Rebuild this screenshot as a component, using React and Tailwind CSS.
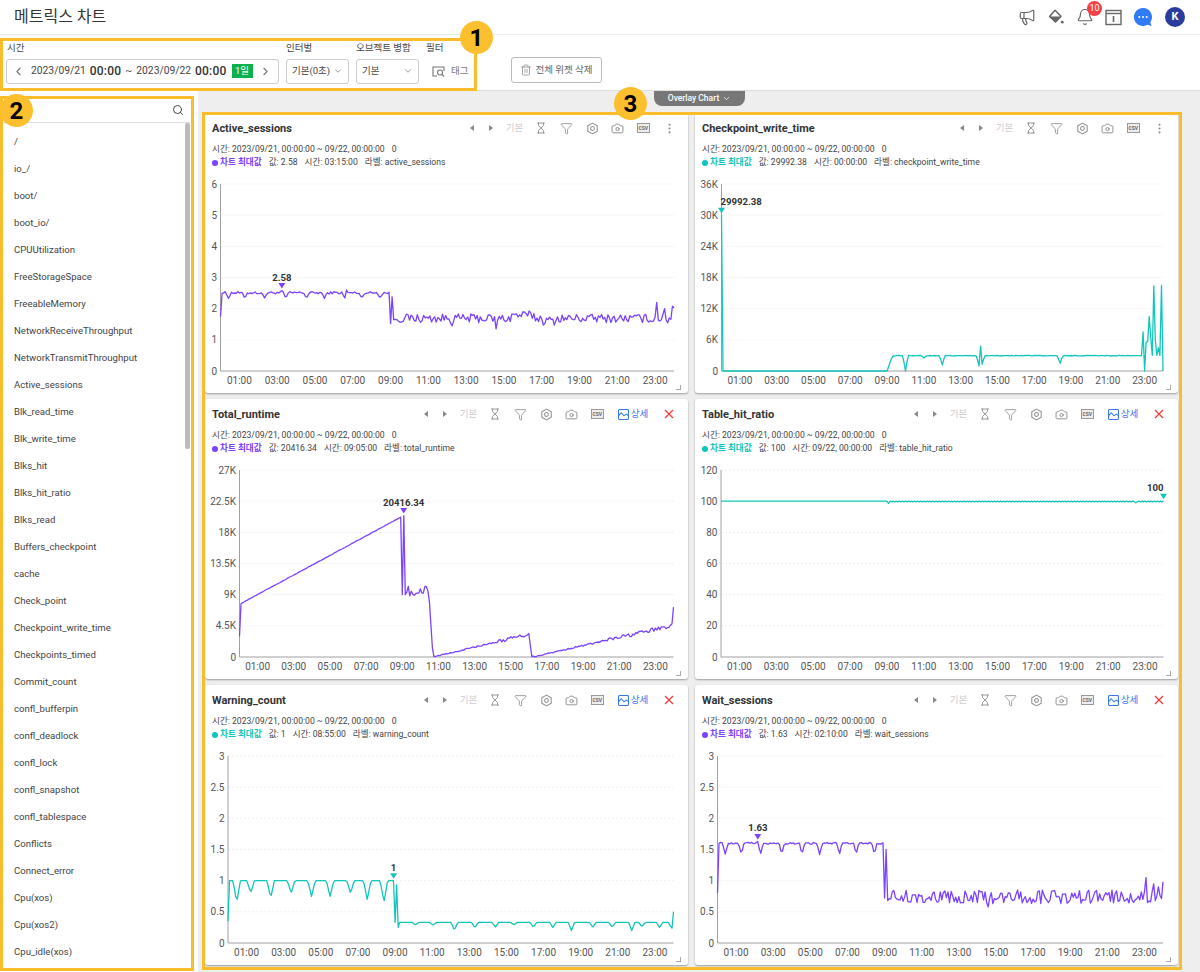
import { Megaphone, Bell, Hourglass, Funnel, Camera, EllipsisVertical, Search, ChevronLeft, ChevronRight, ChevronDown, Trash2 } from 'lucide-react';

const PURPLE = '#7b42ff';
const TEAL = '#10c6ba';

const metrics = ['/', 'io_/', 'boot/', 'boot_io/', 'CPUUtilization', 'FreeStorageSpace', 'FreeableMemory', 'NetworkReceiveThroughput', 'NetworkTransmitThroughput', 'Active_sessions', 'Blk_read_time', 'Blk_write_time', 'Blks_hit', 'Blks_hit_ratio', 'Blks_read', 'Buffers_checkpoint', 'cache', 'Check_point', 'Checkpoint_write_time', 'Checkpoints_timed', 'Commit_count', 'confl_bufferpin', 'confl_deadlock', 'confl_lock', 'confl_snapshot', 'confl_tablespace', 'Conflicts', 'Connect_error', 'Cpu(xos)', 'Cpu(xos2)', 'Cpu_idle(xos)'];

const hours = ['01:00', '03:00', '05:00', '07:00', '09:00', '11:00', '13:00', '15:00', '17:00', '19:00', '21:00', '23:00'];

function makeRandom(seed) {
  let s = seed;
  return () => {
    s = (s * 16807) % 2147483647;
    return s / 2147483647;
  };
}

function applyDips(h, v, dips, width = 0.14) {
  let out = v;
  for (const [c, d] of dips) {
    const t = Math.abs(h - c);
    if (t < width) out = Math.min(out, d + (v - d) * (t / width));
  }
  return out;
}

function build(fn, overrides = []) {
  const arr = [];
  for (let i = 0; i <= 288; i++) arr.push(fn(i / 12, i));
  for (const [h, v] of overrides) arr[Math.round(h * 12)] = v;
  return arr;
}

const morningHours = [0.42, 1.28, 2.32, 3.46, 4.55, 5.5, 6.57, 7.47, 8.45];

function activeSeries() {
  const r = makeRandom(1234);
  return build((h) => {
    if (h < 8.95) return applyDips(h, 2.51 + (r() - 0.5) * 0.08, morningHours.map((c) => [c, 2.33]));
    const wave = h > 15.4 && h < 16.6 ? 0.1 : h > 17 && h < 17.8 ? -0.08 : 0;
    return 1.69 + wave + (r() - 0.5) * 0.28;
  }, [[0, 1.75], [3.25, 2.58], [6.67, 2.6], [9, 1.52], [9.08, 2.38], [9.17, 1.65], [12.25, 1.45], [14.58, 1.35], [23.08, 2.2], [22.92, 1.6], [23.5, 2.0], [23.67, 1.55], [23.92, 2.08], [24, 2.03]]);
}

function waitSeries() {
  const r = makeRandom(4321);
  return build((h) => {
    if (h < 8.95) return applyDips(h, 1.6 + (r() - 0.5) * 0.03, morningHours.map((c) => [c, 1.42]));
    return 0.74 + (r() - 0.5) * 0.22;
  }, [[0, 0.8], [2.17, 1.63], [9, 0.72], [9.08, 1.5], [9.17, 0.68], [14.58, 0.58], [23.08, 1.05], [23.17, 0.65], [23.5, 0.95], [23.58, 0.68], [23.75, 0.9], [24, 0.98]]);
}

function warningSeries() {
  const morning = [[0.47, 0.65], [1.22, 0.8], [2.3, 0.72], [3.4, 0.8], [4.5, 0.75], [5.5, 0.75], [6.6, 0.8], [7.5, 0.7], [8.4, 0.65]];
  const rest = [[10.1, 0.29], [11.05, 0.28], [12.2, 0.2], [13.3, 0.24], [14.4, 0.25], [15.4, 0.29], [16.45, 0.25], [17.5, 0.25], [18.5, 0.2], [19.65, 0.25], [20.7, 0.25], [21.75, 0.2], [22.3, 0.26], [23.25, 0.25], [23.9, 0.23]];
  return build((h) => {
    if (h < 8.9) return applyDips(h, 1, morning, 0.2);
    return applyDips(h, 0.33, rest, 0.17);
  }, [[0, 0.35], [8.92, 1], [9, 0.33], [9.08, 0.93], [9.17, 0.25], [24, 0.5]]);
}

function totalSeries() {
  const r = makeRandom(777);
  return build((h) => {
    if (h < 8.95) return 7600 + (h / 8.92) * 12600 + (r() - 0.5) * 60;
    if (h < 10.45) return 9500 + (r() - 0.5) * 1700;
    if (h < 10.7) return 10000 - ((h - 10.45) / 0.25) * 10000;
    if (h < 16) return Math.max(0, ((h - 10.7) / 5.3) * 3300 + (r() - 0.5) * (h > 14 ? 500 : 180));
    if (h < 16.17) return 3400 - ((h - 16) / 0.17) * 3400;
    return Math.max(0, ((h - 16.17) / 7.7) * 4500 + (r() - 0.5) * (h > 20 ? 560 : 200));
  }, [[0, 3000], [8.92, 20200], [9, 9000], [9.08, 20416], [9.17, 9000], [10.5, 8000], [23.92, 4800], [24, 7200]]);
}

function checkpointSeries() {
  const r = makeRandom(99);
  const dips = [[10, 0], [11, 2500], [12, 1200], [14, 1000], [14.17, 1300], [18.4, 1300], [22.98, 0]];
  return build((h) => {
    if (h < 9) return 0;
    if (h < 9.3) return ((h - 9) / 0.3) * 3000;
    if (h > 22.8) return 3000;
    return applyDips(h, 2950 + (r() - 0.5) * 120, dips, 0.14);
  }, [[0, 29992], [14.08, 4800], [22.83, 3000], [22.92, 7500], [23, 0], [23.08, 5500], [23.17, 5700], [23.25, 10500], [23.33, 6500], [23.5, 16400], [23.58, 6000], [23.75, 4500], [23.92, 16500], [24, 0]]);
}

function tableSeries() {
  return build((h, i) => {
    if (h < 9) return 100;
    return i % 2 ? 99.6 : 100;
  }, [[9.08, 98.5], [22.5, 99]]);
}

const charts = [
  { title: 'Active_sessions', color: PURPLE, value: '2.58', time: '03:15:00', label: 'active_sessions', left: 15.5, right: 469, max: 6, ticks: ['6', '5', '4', '3', '2', '1', '0'], data: activeSeries(), peak: [3.25, 2.58], mark: '2.58', anchor: 'middle' },
  { title: 'Checkpoint_write_time', color: TEAL, value: '29992.38', time: '00:00:00', label: 'checkpoint_write_time', left: 26.5, right: 468, max: 36000, ticks: ['36K', '30K', '24K', '18K', '12K', '6K', '0'], data: checkpointSeries(), peak: [0, 29992], mark: '29992.38', anchor: 'start' },
  { title: 'Total_runtime', color: PURPLE, value: '20416.34', time: '09:05:00', label: 'total_runtime', left: 34.5, right: 468.5, max: 27000, ticks: ['27K', '22.5K', '18K', '13.5K', '9K', '4.5K', '0'], data: totalSeries(), peak: [9.08, 20416], mark: '20416.34', anchor: 'middle', detail: true },
  { title: 'Table_hit_ratio', color: TEAL, value: '100', time: '09/22, 00:00:00', label: 'table_hit_ratio', left: 26, right: 468.5, max: 120, ticks: ['120', '100', '80', '60', '40', '20', '0'], data: tableSeries(), peak: [24, 100], mark: '100', anchor: 'end', detail: true },
  { title: 'Warning_count', color: TEAL, value: '1', time: '08:55:00', label: 'warning_count', left: 23, right: 468.5, max: 3, ticks: ['3', '2.5', '2', '1.5', '1', '0.5', '0'], data: warningSeries(), peak: [8.92, 1], mark: '1', anchor: 'middle', detail: true },
  { title: 'Wait_sessions', color: PURPLE, value: '1.63', time: '02:10:00', label: 'wait_sessions', left: 22.5, right: 468, max: 3, ticks: ['3', '2.5', '2', '1.5', '1', '0.5', '0'], data: waitSeries(), peak: [2.17, 1.63], mark: '1.63', anchor: 'middle', detail: true },
];

function LineChart({ chart }) {
  const top = 11;
  const bottom = 198;
  const { left, right, max, ticks, data, color, peak, mark, anchor } = chart;
  const px = (h) => left + (h / 24) * (right - left);
  const py = (v) => bottom - (v / max) * (bottom - top);
  const points = data.map((v, i) => `${px(i / 12).toFixed(1)},${py(v).toFixed(1)}`).join(' ');
  const peakX = px(peak[0]);
  const peakY = py(peak[1]);
  const markX = anchor === 'end' ? right : anchor === 'start' ? left - 1 : peakX;

  return (
    <svg width="483" height="220" viewBox="0 0 483 220" className="block font-[Roboto,sans-serif]">
      {ticks.map((t, i) => {
        const y = top + (i * (bottom - top)) / (ticks.length - 1);
        return (
          <g key={t}>
            {i < ticks.length - 1 && <line x1={left} x2={right} y1={y} y2={y} stroke="#efefef" strokeWidth="1" strokeDasharray="2 2" />}
            <text x={left - 3.5} y={y + 3.5} textAnchor="end" fontSize="10" fill="#555">{t}</text>
          </g>
        );
      })}
      <line x1={left} x2={left} y1={top} y2={bottom} stroke="#a0a0a0" strokeWidth="1" />
      <line x1={left} x2={right} y1={bottom} y2={bottom} stroke="#a0a0a0" strokeWidth="1" />
      {hours.map((h, i) => (
        <text key={h} x={px(1 + i * 2)} y={211} textAnchor="middle" fontSize="10" fill="#555">{h}</text>
      ))}
      <polyline points={points} fill="none" stroke={color} strokeWidth="1.3" strokeLinejoin="round" />
      <polygon points={`${peakX - 3.5},${peakY - 7.5} ${peakX + 3.5},${peakY - 7.5} ${peakX},${peakY - 2}`} fill={color} />
      <text x={markX} y={peakY - 10} textAnchor={anchor} fontSize="9.6" fontWeight="700" fill="#333">{mark}</text>
    </svg>
  );
}

function GearIcon() {
  return (
    <svg width="13" height="13" viewBox="0 0 24 24" fill="none" stroke="#909090" strokeWidth="1.9">
      <path d="M12 2l8.7 5v10L12 22l-8.7-5V7z" strokeLinejoin="round" />
      <circle cx="12" cy="12" r="3.5" />
    </svg>
  );
}

function CsvIcon() {
  return (
    <div className="w-[13px] h-[10px] border border-[#999] bg-[#eee] flex items-center justify-center text-[5px] font-bold leading-none text-[#666]">CSV</div>
  );
}

function DetailIcon() {
  return (
    <svg width="11" height="11" viewBox="0 0 12 12" fill="none">
      <rect x="0.6" y="0.6" width="10.8" height="10.8" rx="1" stroke="#3578f0" strokeWidth="1.2" />
      <path d="M1 7l2.5-3 3 3.5L9 5.5l2 1.5" stroke="#3578f0" strokeWidth="1.1" />
    </svg>
  );
}

function CloseIcon() {
  return (
    <svg width="10" height="10" viewBox="0 0 10 10" fill="none">
      <path d="M1 1l8 8M9 1l-8 8" stroke="#ee3b3b" strokeWidth="1.3" />
    </svg>
  );
}

function Slot({ children, className = 'w-[25.5px]' }) {
  return <div className={`flex items-center justify-center shrink-0 ${className}`}>{children}</div>;
}

function ChartCard({ chart }) {
  return (
    <div className="relative h-[280px] w-[483px] bg-white rounded-[3px] shadow-[0_1px_2px_rgba(0,0,0,0.35)]">
      <div className="flex items-center justify-between h-[30px] pl-[7px] pr-[6px]">
        <div className="text-[11px] font-bold text-[#333] leading-none">{chart.title}</div>
        <div className="flex items-center">
          <Slot className="w-[19px]"><div className="w-0 h-0 border-y-[3.5px] border-y-transparent border-r-[4px] border-r-[#888]" /></Slot>
          <Slot className="w-[19px]"><div className="w-0 h-0 border-y-[3.5px] border-y-transparent border-l-[4px] border-l-[#888]" /></Slot>
          <Slot className="w-[28px]"><span className="text-[9.5px] text-[#ccc]">기본</span></Slot>
          <Slot><Hourglass size={12} color="#909090" strokeWidth={1.8} /></Slot>
          <Slot><Funnel size={13} color="#909090" strokeWidth={1.6} /></Slot>
          <Slot><GearIcon /></Slot>
          <Slot><Camera size={13} color="#909090" strokeWidth={1.8} /></Slot>
          <Slot><CsvIcon /></Slot>
          {chart.detail ? (
            <>
              <Slot className="w-[46px] gap-[2px]">
                <DetailIcon />
                <span className="text-[9.5px] text-[#3578f0]">상세</span>
              </Slot>
              <Slot className="w-[26px]"><CloseIcon /></Slot>
            </>
          ) : (
            <Slot className="w-[26px]"><EllipsisVertical size={13} color="#909090" /></Slot>
          )}
        </div>
      </div>
      <div className="pl-[7px] h-[30px] text-[8.6px] text-[#444] leading-[13px]">
        <div className="flex gap-[7px]">
          <span>시간: 2023/09/21, 00:00:00 ~ 09/22, 00:00:00</span>
          <span>0</span>
        </div>
        <div className="flex items-center gap-[7px]">
          <span className="flex items-center gap-[2px] font-bold" style={{ color: chart.color }}>
            <span className="w-[6px] h-[6px] rounded-full inline-block" style={{ background: chart.color }} />
            차트 최대값
          </span>
          <span>값: {chart.value}</span>
          <span>시간: {chart.time}</span>
          <span>라벨: {chart.label}</span>
        </div>
      </div>
      <LineChart chart={chart} />
      <div className="absolute right-[7px] bottom-[3px] w-[5px] h-[5px] border-r border-b border-[#aaa]" />
    </div>
  );
}

function PaintIcon() {
  return (
    <svg width="18" height="18" viewBox="0 0 18 18" fill="none">
      <path d="M8 2.2L14 8.2 8.5 14 2.6 8.4z" stroke="#666" strokeWidth="1.5" strokeLinejoin="round" />
      <path d="M2.6 8.4h11.4L8.5 14z" fill="#666" />
      <circle cx="15.3" cy="14.2" r="1.4" fill="#666" />
    </svg>
  );
}

function PanelIcon() {
  return (
    <svg width="17" height="17" viewBox="0 0 17 17" fill="none">
      <rect x="1" y="1.5" width="15" height="14" stroke="#666" strokeWidth="1.4" />
      <path d="M1 4.5h15" stroke="#666" strokeWidth="1.4" />
      <path d="M8.5 7v6" stroke="#666" strokeWidth="1.6" />
    </svg>
  );
}

function ChatIcon() {
  return (
    <svg width="20" height="20" viewBox="0 0 20 20">
      <path d="M10 1a9 9 0 1 0 4.6 16.7L18.6 19l-1.3-3.8A9 9 0 0 0 10 1z" fill="#2f7bf5" />
      <circle cx="6.3" cy="10" r="1" fill="#fff" />
      <circle cx="10" cy="10" r="1" fill="#fff" />
      <circle cx="13.7" cy="10" r="1" fill="#fff" />
    </svg>
  );
}

function FieldLabel({ children, className = '' }) {
  return <div className={`text-[9.5px] text-[#444] leading-none mb-[6px] ${className}`}>{children}</div>;
}

function Annotation({ n, className }) {
  return (
    <div className={`absolute w-[33px] h-[33px] rounded-full bg-[#fcc02e] flex items-center justify-center text-[24px] font-bold text-black ${className}`}>{n}</div>
  );
}

export default function App() {
  return (
    <div className="relative w-[1200px] h-[972px] overflow-hidden bg-white font-[Roboto,'Noto_Sans_CJK_KR',sans-serif]">
      <header className="flex items-center justify-between h-[35px] pl-[14px] border-b border-[#eee]">
        <h1 className="text-[16px] text-[#333]">메트릭스 차트</h1>
        <div className="flex items-center pr-[15px]">
          <Megaphone size={18} color="#666" strokeWidth={1.6} />
          <div className="w-[29px] flex justify-center ml-[5px]"><PaintIcon /></div>
          <div className="relative w-[29px] flex justify-center">
            <Bell size={18} color="#666" strokeWidth={1.6} />
            <span className="absolute left-[17px] top-[-7px] w-[15px] h-[15px] rounded-full bg-[#f43f46] text-white text-[9px] flex items-center justify-center">10</span>
          </div>
          <div className="w-[29px] flex justify-center"><PanelIcon /></div>
          <div className="w-[29px] flex justify-center"><ChatIcon /></div>
          <div className="ml-[8px] w-[20px] h-[20px] rounded-full bg-[#2a3d9c] text-white text-[11px] font-bold flex items-center justify-center">K</div>
        </div>
      </header>

      <div className="flex h-[56px] pl-[6px] pt-[8px] border-b border-[#ddd]">
        <div className="w-[280px]">
          <FieldLabel className="pl-[1px]">시간</FieldLabel>
          <div className="w-[273px] h-[25px] border border-[#ccc] rounded-[3px] flex items-center text-[10.3px] text-[#444]">
            <ChevronLeft size={13} color="#777" className="ml-[5px] mr-[6px]" />
            <span>2023/09/21</span>
            <span className="ml-[4px] text-[12px] font-medium tracking-[0.2px] text-[#333]">00:00</span>
            <span className="ml-[4px] mr-[4px]">~</span>
            <span>2023/09/22</span>
            <span className="ml-[4px] text-[12px] font-medium tracking-[0.2px] text-[#333]">00:00</span>
            <span className="ml-[5px] w-[21px] h-[14px] bg-[#0bb04f] text-white text-[9.5px] flex items-center justify-center">1일</span>
            <ChevronRight size={13} color="#777" className="ml-[6px]" />
          </div>
        </div>
        <div className="w-[70px]">
          <FieldLabel>인터벌</FieldLabel>
          <div className="w-[63px] h-[25px] border border-[#ccc] rounded-[3px] flex items-center justify-between px-[5px] text-[9.5px] text-[#444]">
            기본(0초)
            <ChevronDown size={10} color="#888" />
          </div>
        </div>
        <div className="w-[70px]">
          <FieldLabel>오브젝트 병합</FieldLabel>
          <div className="w-[63px] h-[25px] border border-[#ccc] rounded-[3px] flex items-center justify-between px-[5px] text-[9.5px] text-[#444]">
            기본
            <ChevronDown size={10} color="#888" />
          </div>
        </div>
        <div className="w-[85px]">
          <FieldLabel>필터</FieldLabel>
          <div className="h-[25px] flex items-center pl-[6px] text-[9.5px] text-[#777] gap-[5px]">
            <svg width="14" height="13" viewBox="0 0 14 13" fill="none">
              <path d="M5 11H1V2h11v4" stroke="#777" strokeWidth="1.1" />
              <circle cx="8" cy="7.5" r="2.5" stroke="#777" strokeWidth="1.1" />
              <path d="M10 9.5l2 2" stroke="#777" strokeWidth="1.1" />
            </svg>
            태그
          </div>
        </div>
        <div className="h-[26px] w-[91px] mt-[14px] border border-[#bbb] rounded-[3px] flex items-center justify-center gap-[3px] text-[9.5px] text-[#666]">
          <Trash2 size={12} color="#888" strokeWidth={1.5} />
          전체 위젯 삭제
        </div>
      </div>

      <div className="flex h-[881px]">
        <aside className="w-[198px] shrink-0 bg-white flex flex-col">
          <div className="h-[26px] ml-[3px] w-[187px] mt-[6px] flex items-center justify-end pr-[6px] border-b border-[#ddd] shrink-0">
            <Search size={12} color="#444" />
          </div>
          <div className="flex flex-1 min-h-0 w-[190px]">
            <ul className="flex-1 pl-[14px] text-[9.6px] text-[#444] overflow-hidden pt-[6px]">
              {metrics.map((m) => (
                <li key={m} className="h-[27px] flex items-center">{m}</li>
              ))}
            </ul>
            <div className="w-[5px] shrink-0">
              <div className="h-[326px] bg-[#bbb] rounded-[2px]" />
            </div>
          </div>
        </aside>
        <main className="flex-1 bg-[#eeeeee] pl-[7px] pt-[22px] relative">
          <div className="grid grid-cols-[483px_483px] gap-x-[7px] gap-y-[6px]">
            {charts.map((c) => (
              <ChartCard key={c.title} chart={c} />
            ))}
          </div>
          <div className="absolute left-[456px] top-0 w-[91px] h-[15px] bg-[#777] rounded-b-[8px] flex items-center justify-center gap-[3px] text-[8.5px] font-medium text-white">
            Overlay Chart
            <ChevronDown size={9} color="#fff" />
          </div>
        </main>
      </div>

      <div className="absolute left-0 top-[38px] w-[477px] h-[53px] border-[3px] border-[#f9bd2c] pointer-events-none" />
      <div className="absolute left-0 top-[96px] w-[194px] h-[875px] border-[3px] border-[#f9bd2c] pointer-events-none" />
      <div className="absolute left-[202px] top-[112px] w-[980px] h-[858px] border-[3px] border-[#f9bd2c] pointer-events-none" />
      <Annotation n="1" className="left-[460px] top-[21px]" />
      <Annotation n="2" className="left-[0px] top-[94px]" />
      <Annotation n="3" className="left-[614px] top-[87px]" />
    </div>
  );
}
